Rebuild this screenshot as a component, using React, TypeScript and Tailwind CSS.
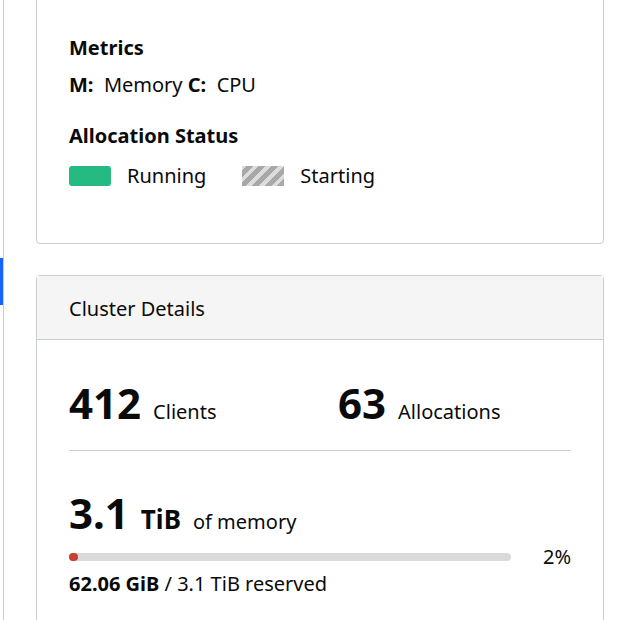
import React from 'react'

const font = { fontFamily: '"Noto Sans", "Open Sans", sans-serif' }

function Legend() {
  return (
    <div className="flex items-center">
      <span className="h-5 w-[42px] rounded-[3px] bg-[#25ba81]" />
      <span className="ml-4 text-[20px] leading-none">Running</span>
      <span
        className="ml-[36px] h-5 w-[42px] bg-[repeating-linear-gradient(-45deg,#a8a8a8_0px,#a8a8a8_5px,#dcdcdc_5px,#dcdcdc_9px)]"
      />
      <span className="ml-4 text-[20px] leading-none">Starting</span>
    </div>
  )
}

export default function App() {
  return (
    <div className="flex h-[620px] overflow-hidden bg-white text-[#0a0a0a]" style={font}>
      {/* sidebar edge */}
      <div className="w-[4px] shrink-0 border-r border-[#c9ced3]">
        <div className="mt-[258px] h-[47px] w-[3px] bg-[#1563ff]" />
      </div>

      <div className="flex flex-1 flex-col pl-8 pr-[18px]">
        {/* Legend card */}
        <div className="-mt-4 shrink-0 rounded border border-[#c9ced3] px-8 pt-[51px] pb-[57px]">
          <h3 className="text-[20px] font-bold leading-6">Metrics</h3>
          <p className="mt-[13px] text-[20px] leading-6">
            <b>M:</b>&nbsp; Memory <b>C:</b>&nbsp; CPU
          </p>
          <h3 className="mt-[27px] text-[20px] font-bold leading-6">Allocation Status</h3>
          <div className="mt-[18px]">
            <Legend />
          </div>
        </div>

        {/* Cluster details */}
        <div className="mt-[31px] shrink-0 rounded border border-[#c9ced3]">
          <div className="h-[64px] border-b border-[#c9ced3] bg-[#f5f5f5] px-8 pt-[21px] text-[20px] leading-6">
            Cluster Details
          </div>
          <div className="px-8 pt-[42px] pb-20">
            <div className="flex items-baseline border-b border-[#c9ced3] pb-[23px]">
              <div className="flex w-[269px] items-baseline">
                <span className="text-[42px] font-bold leading-[42px]">412</span>
                <span className="ml-3 text-[20px]">Clients</span>
              </div>
              <div className="flex items-baseline">
                <span className="text-[42px] font-bold leading-[42px]">63</span>
                <span className="ml-3 text-[20px]">Allocations</span>
              </div>
            </div>
            <div className="mt-[41px] flex items-baseline">
              <span className="text-[42px] font-bold leading-[42px]">3.1</span>
              <span className="ml-3 text-[26px] font-bold">TiB</span>
              <span className="ml-3 text-[20px]">of memory</span>
            </div>
            <div className="mt-[8px] flex items-center">
              <div className="h-2 w-[442px] rounded-full bg-[#dadada]">
                <div className="h-2 w-[9px] rounded-full bg-[#c84034]" />
              </div>
              <span className="ml-auto text-[20px] leading-none">2%</span>
            </div>
            <p className="mt-[5px] text-[20px] leading-6">
              <b>62.06 GiB</b> / 3.1 TiB reserved
            </p>
          </div>
        </div>
      </div>
    </div>
  )
}
